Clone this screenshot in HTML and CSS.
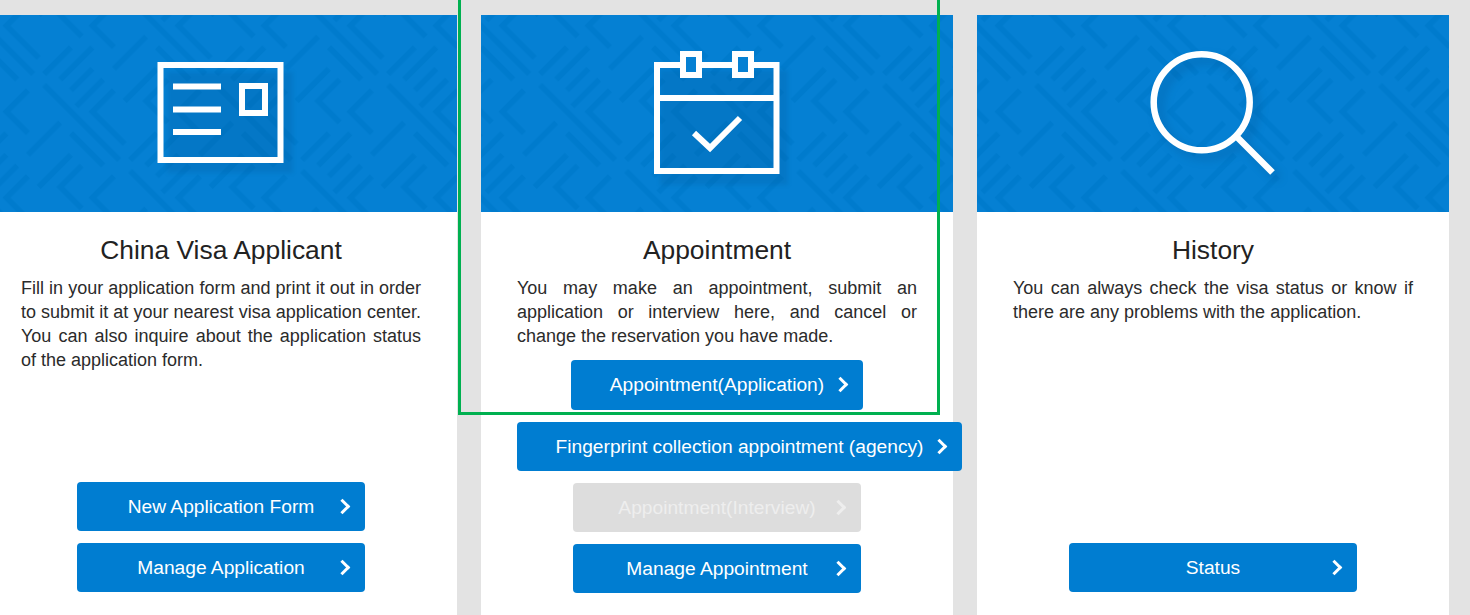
FILE: index.html
```html
<!DOCTYPE html>
<html lang="en">
<head>
    <meta charset="UTF-8">
    <title>China Visa Application</title>
    <link rel="stylesheet" href="styles.css">
</head>
<body>
    <div class="columns">
        <div class="card">
            <div class="banner">
                <svg class="icon" width="140" height="121" viewBox="0 0 140 121">
                    <rect class="shade" x="16" y="19" width="126" height="101"/>
                    <g class="line">
                        <rect x="9.5" y="12" width="120" height="95"/>
                        <path d="M22 33.5H70M22 56.5H70M22 79H70"/>
                        <rect x="91" y="33" width="23" height="27"/>
                    </g>
                </svg>
            </div>
            <div class="card-body">
                <h2>China Visa Applicant</h2>
                <p>Fill in your application form and print it out in order to submit it at your nearest visa application center. You can also inquire about the application status of the application form.</p>
                <div class="actions bottom">
                    <a class="btn">New Application Form</a>
                    <a class="btn">Manage Application</a>
                </div>
            </div>
        </div>

        <div class="card">
            <div class="banner">
                <svg class="icon" width="140" height="141" viewBox="0 0 140 141">
                    <rect class="shade" x="13" y="27" width="128" height="115"/>
                    <g class="line">
                        <rect x="10" y="22" width="119.5" height="106"/>
                        <path d="M10 55H129.5"/>
                        <rect class="cut" x="36" y="11" width="16" height="21"/>
                        <rect class="cut" x="88" y="11" width="16" height="21"/>
                        <path class="tick" d="M47 90L63 105L93 75"/>
                    </g>
                </svg>
            </div>
            <div class="card-body">
                <h2>Appointment</h2>
                <p>You may make an appointment, submit an application or interview here, and cancel or change the reservation you have made.</p>
                <div class="actions">
                    <a class="btn btn-app">Appointment(Application)</a>
                    <a class="btn btn-wide">Fingerprint collection appointment (agency)</a>
                    <a class="btn btn-off">Appointment(Interview)</a>
                    <a class="btn">Manage Appointment</a>
                </div>
            </div>
        </div>

        <div class="card">
            <div class="banner">
                <svg class="icon icon-soft" width="140" height="141" viewBox="0 0 140 141">
                    <g class="line line-thick">
                        <circle cx="58.7" cy="59.3" r="48"/>
                        <path d="M94 94L129.5 129.5"/>
                    </g>
                </svg>
            </div>
            <div class="card-body">
                <h2>History</h2>
                <p>You can always check the visa status or know if there are any problems with the application.</p>
                <div class="actions bottom">
                    <a class="btn">Status</a>
                </div>
            </div>
        </div>
    </div>

    <div class="mark"></div>
</body>
</html>
```

FILE: styles.css
```css
html, body {
    height: 615px;
    overflow: hidden;
}
body {
    margin: 0;
    padding-top: 15px;
    box-sizing: border-box;
    background-color: #e3e3e3;
    font-family: "Liberation Sans", Arial, sans-serif;
    color: #333;
}
.columns {
    display: flex;
    gap: 24px;
    margin-left: -15px;
    height: 600px;
}
.card {
    flex: 0 0 472px;
    min-width: 0;
    background-color: #fff;
    display: flex;
    flex-direction: column;
}
.banner {
    height: 197px;
    background-color: #0580d3;
    background-image: url("data:image/svg+xml,%3Csvg xmlns='http://www.w3.org/2000/svg' width='472' height='197'%3E%3Cdefs%3E%3Cpattern id='m' width='64' height='64' patternUnits='userSpaceOnUse' patternTransform='rotate(45) scale(1.9)'%3E%3Cpath d='M0 4H40M48 4H64M4 12V36M12 12H36M44 12V28H60M20 20V44M28 20V36H44M52 36V60M12 44V60H36M44 44V64M60 44V60M4 44V64' fill='none' stroke='%23007bcd' stroke-width='3'/%3E%3C/pattern%3E%3C/defs%3E%3Crect width='472' height='197' fill='url(%23m)'/%3E%3C/svg%3E");
    display: flex;
    align-items: center;
    justify-content: center;
}
.icon {
    overflow: visible;
}
.icon-soft {
    filter: drop-shadow(6px 6px 5px rgba(0, 50, 100, 0.22));
}
.shade {
    fill: rgba(0, 60, 110, 0.12);
    filter: blur(2px);
}
.line {
    fill: none;
    stroke: #fff;
    stroke-width: 6;
}
.line-thick {
    stroke-width: 6.5;
}
.line .cut {
    fill: #0580d3;
}
.card-body {
    flex: 1;
    min-width: 0;
    display: flex;
    flex-direction: column;
    padding: 21px 36px 0;
}
h2 {
    margin: 0 0 9px;
    font-size: 26.4px;
    font-weight: normal;
    line-height: 34px;
    text-align: center;
    color: #222;
}
p {
    margin: 0;
    font-size: 18px;
    line-height: 24px;
    text-align: justify;
    color: #2b2b2b;
}
.actions {
    display: flex;
    flex-direction: column;
    align-items: center;
    gap: 12px;
    margin-top: 12px;
}
.bottom {
    margin-top: auto;
    margin-bottom: 23px;
}
.btn {
    position: relative;
    box-sizing: border-box;
    flex: none;
    width: 288px;
    height: 49px;
    border-radius: 4px;
    background-color: #007dd1;
    color: #fff;
    font-size: 19.2px;
    line-height: 49px;
    text-align: center;
    white-space: nowrap;
}
.btn::after {
    content: "";
    position: absolute;
    right: 17px;
    top: 19px;
    width: 8px;
    height: 8px;
    border-top: 3px solid #fff;
    border-right: 3px solid #fff;
    transform: rotate(45deg);
}
.btn-app {
    width: 292px;
    height: 50px;
}
.btn-wide {
    width: 445px;
    align-self: flex-start;
}
.btn-off {
    background-color: #ddd;
    color: #eee;
}
.btn-off::after {
    border-color: #eee;
}
.mark {
    position: absolute;
    left: 458px;
    top: -10px;
    width: 476px;
    height: 419px;
    border: 3px solid #00b050;
}
```
